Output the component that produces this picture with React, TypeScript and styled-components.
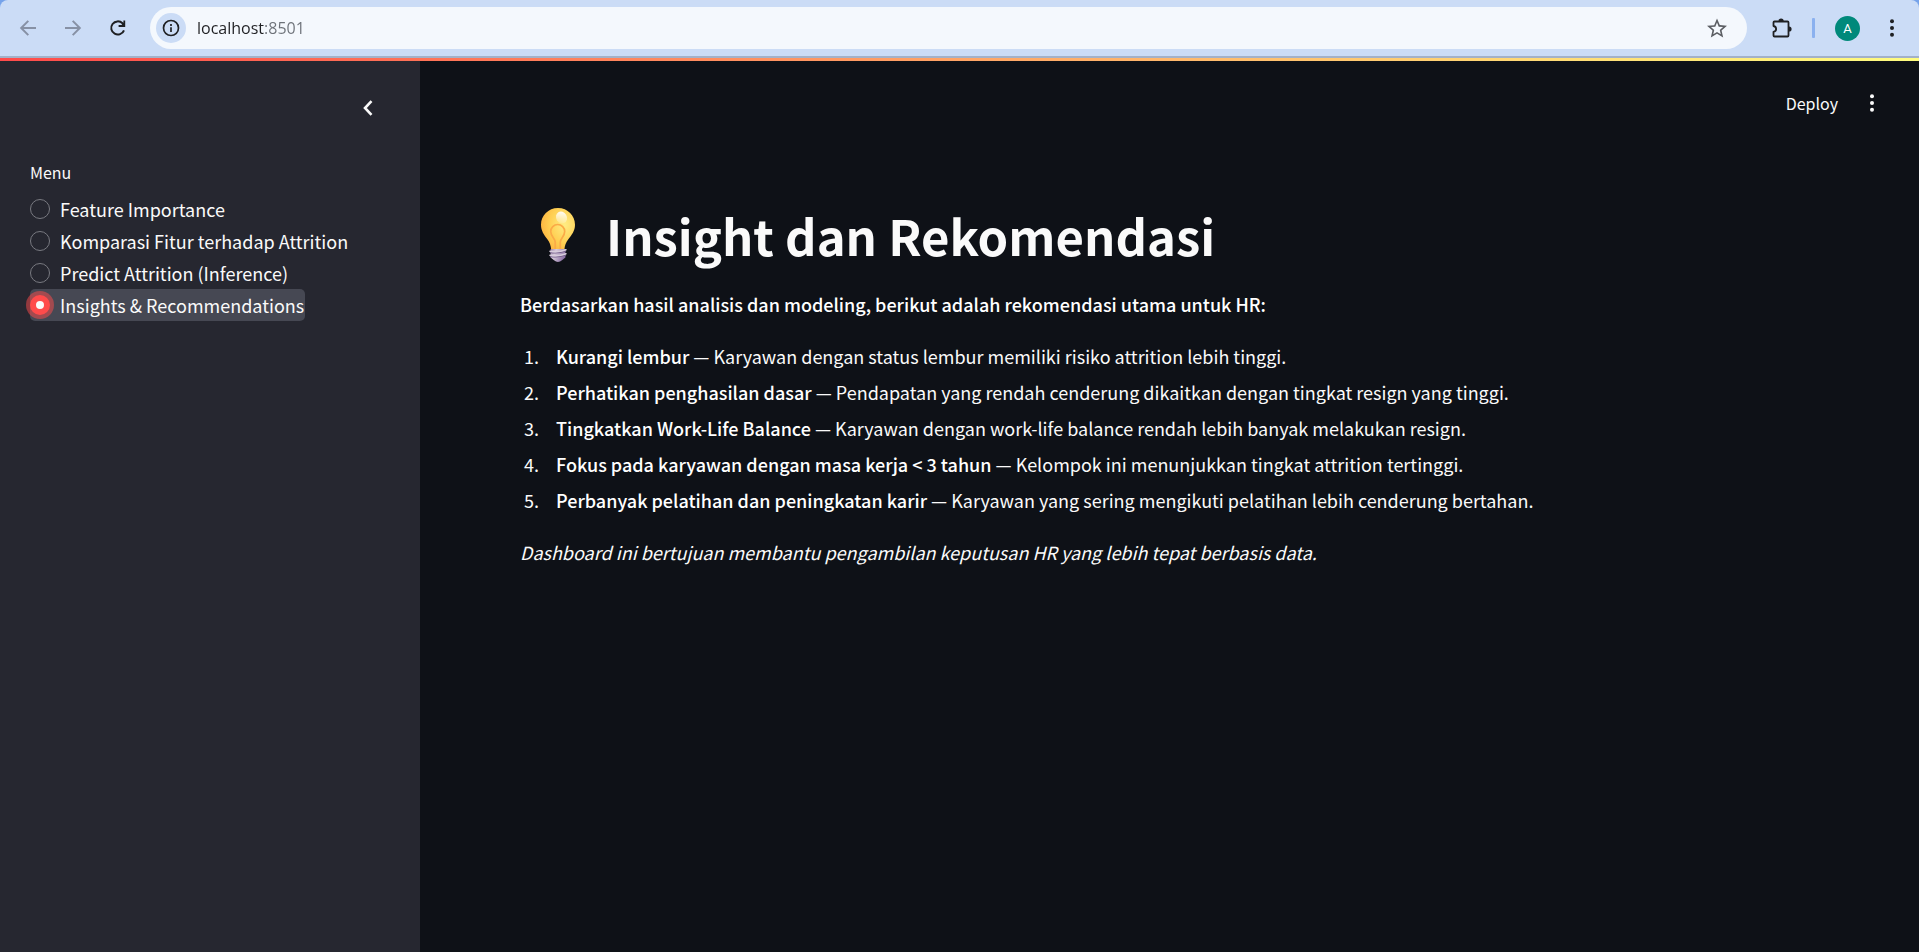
import React, { useState } from 'react';
import styled, { createGlobalStyle } from 'styled-components';

const GlobalStyle = createGlobalStyle`
  *, *::before, *::after { box-sizing: border-box; }
  body {
    margin: 0;
    background: #0e1117;
    color: #fafafa;
    font-family: "Noto Sans CJK SC", "Open Sans", sans-serif;
    font-size: 18px;
    line-height: 32px;
  }
  button, input { font: inherit; color: inherit; }
  strong { font-weight: 500; color: #fff; }
`;

const Window = styled.div`
  min-height: 100vh;
  display: flex;
  flex-direction: column;
`;

const BrowserFrame = styled.div`
  background: #76a3ea;
`;

const BrowserBar = styled.header`
  height: 58px;
  display: flex;
  align-items: center;
  padding: 0 15px 0 16px;
  background: #cbdcf6;
  border-bottom: 2px solid #a3b1c8;
  border-radius: 8px 8px 0 0;
`;

const IconButton = styled.button<{ $size?: number; $color?: string }>`
  display: flex;
  align-items: center;
  justify-content: center;
  flex: none;
  width: ${({ $size = 24 }) => $size}px;
  height: ${({ $size = 24 }) => $size}px;
  padding: 0;
  border: 0;
  background: none;
  color: ${({ $color = '#1f2023' }) => $color};
  cursor: pointer;
`;

const NavButtons = styled.nav`
  display: flex;
  gap: 21px;
  margin-right: 20px;
`;

const AddressBar = styled.div`
  flex: 1;
  height: 42px;
  display: flex;
  align-items: center;
  padding: 0 18px 0 6px;
  border-radius: 21px;
  background: #f4f8fd;
`;

const SiteInfo = styled(IconButton)`
  border-radius: 50%;
  background: #cbdcf6;
`;

const AddressInput = styled.input`
  flex: 1;
  min-width: 0;
  margin-left: 11px;
  padding: 0;
  border: 0;
  outline: 0;
  font-family: "Open Sans", "Noto Sans", sans-serif;
  font-size: 16px;
  line-height: 24px;
  color: transparent;
  background: linear-gradient(to right, #1f2023 68px, #6c7178 68px);
  background-clip: text;
  -webkit-background-clip: text;
`;

const BrowserActions = styled.div`
  display: flex;
  align-items: center;
  margin-left: 22px;
`;

const Divider = styled.span`
  width: 3px;
  height: 20px;
  margin: 0 20px 0 19px;
  border-radius: 1px;
  background: #8bb1ef;
`;

const Avatar = styled.button`
  width: 25px;
  height: 25px;
  margin-right: 20px;
  padding: 0;
  border: 0;
  border-radius: 50%;
  background: #00897b;
  color: #fff;
  font-family: Roboto, sans-serif;
  font-size: 13px;
  line-height: 25px;
  text-align: center;
`;

const Decoration = styled.div`
  height: 3px;
  background: linear-gradient(to right, #ff4b4b, #fffd80);
`;

const Workspace = styled.div`
  flex: 1;
  display: flex;
`;

const Sidebar = styled.aside`
  flex: none;
  width: 420px;
  padding: 32px 30px;
  background: #262730;
`;

const SidebarHeader = styled.div`
  display: flex;
  justify-content: flex-end;
  padding-right: 7px;
  margin-bottom: 38px;
`;

const MenuGroup = styled.fieldset`
  min-width: 0;
  margin: 0;
  padding: 0;
  border: 0;
`;

const MenuLabel = styled.legend`
  padding: 0;
  margin-bottom: 10px;
  font-size: 16px;
  line-height: 22px;
`;

const MenuItem = styled.label<{ $focused: boolean }>`
  display: flex;
  align-items: center;
  gap: 10px;
  width: fit-content;
  height: 32px;
  padding-right: 1px;
  border-radius: 5px;
  background: ${({ $focused }) => ($focused ? '#464853' : 'transparent')};
  white-space: nowrap;
  cursor: pointer;
`;

const Radio = styled.input`
  appearance: none;
  flex: none;
  width: 20px;
  height: 20px;
  margin: 0;
  border: 1px solid #797a81;
  border-radius: 50%;
  background: #262730;

  &:checked {
    border: 6px solid #ff4b4b;
    background: #fafafa;
    box-shadow: 0 0 0 4px rgba(255, 75, 75, 0.5);
  }
`;

const Main = styled.main`
  flex: 1;
  min-width: 0;
`;

const Toolbar = styled.div`
  display: flex;
  justify-content: flex-end;
  align-items: center;
  gap: 22px;
  padding: 26px 35px 0;
`;

const DeployButton = styled.button`
  padding: 0;
  border: 0;
  background: none;
  font-size: 16px;
  line-height: 32px;
  cursor: pointer;
`;

const Content = styled.article`
  padding: 84px 100px 100px;
`;

const Title = styled.h1`
  display: flex;
  align-items: center;
  gap: 30px;
  margin: 0;
  padding-left: 20px;
  font-size: 49px;
  line-height: 64px;
  font-weight: 700;
`;

const Paragraph = styled.p`
  margin: 0 0 20px;
`;

const Lead = styled(Paragraph)`
  margin-top: 21px;
`;

const Recommendations = styled.ol`
  margin: 0 0 20px;
  padding: 0;
`;

const Recommendation = styled.li`
  margin: 4px 0 4px 23px;
  padding-left: 13px;
`;

const ArrowIcon = ({ forward = false }: { forward?: boolean }) => (
  <svg width="24" height="24" viewBox="0 0 24 24" fill="none" stroke="currentColor" strokeWidth="2" aria-hidden="true">
    {forward ? <path d="M4 12h14.5M11.7 4.9 18.8 12l-7.1 7.1" /> : <path d="M20 12H5.500M12.300 4.900 5.200 12l7.100 7.100" />}
  </svg>
);

const ReloadIcon = () => (
  <svg width="24" height="24" viewBox="0 0 24 24" fill="none" stroke="currentColor" strokeWidth="2" aria-hidden="true">
    <path d="M18 14.300A6.600 6.600 0 1 1 16.500 7.300L18 9" />
    <path d="M18.300 4.500v5.500h-5.700" strokeWidth="1.800" />
    <path d="M18.500 6v4h-4z" fill="currentColor" stroke="none" />
  </svg>
);

const InfoIcon = () => (
  <svg width="18" height="18" viewBox="0 0 18 18" fill="none" stroke="currentColor" strokeWidth="1.700" aria-hidden="true">
    <circle cx="9" cy="9" r="7.500" />
    <path d="M9 8.200v4.800M9 5v1.900" />
  </svg>
);

const StarIcon = () => (
  <svg width="24" height="24" viewBox="0 0 24 24" fill="currentColor" aria-hidden="true">
    <path d="M22 9.740l-7.190-.62L12 2.500 9.190 9.130 2 9.740l5.460 4.730L5.820 21.500 12 17.770 18.180 21.500l-1.630-7.030L22 9.740zM12 15.900l-3.760 2.270 1-4.280-3.320-2.880 4.380-.38L12 6.600l1.710 4.040 4.380.38-3.320 2.880 1 4.280L12 15.900z" />
  </svg>
);

const PuzzleIcon = () => (
  <svg width="24" height="24" viewBox="0 0 24 24" aria-hidden="true">
    <path
      d="M5.500 5.500h13q1 0 1 1v13q0 1-1 1h-13q-1 0-1-1v-3.700c3.500-.7 3.500-5.100 0-5.800V6.500q0-1 1-1z"
      fill="none"
      stroke="currentColor"
      strokeWidth="1.800"
      strokeLinejoin="round"
    />
    <path d="M9.500 5a2.600 2.600 0 0 1 5.200 0zM20 10.400a2.600 2.600 0 0 1 0 5.200z" fill="currentColor" />
  </svg>
);

const DotsIcon = () => (
  <svg width="24" height="24" viewBox="0 0 24 24" fill="currentColor" aria-hidden="true">
    <circle cx="12" cy="5.300" r="2" />
    <circle cx="12" cy="12" r="2" />
    <circle cx="12" cy="18.700" r="2" />
  </svg>
);

const ChevronIcon = () => (
  <svg width="24" height="24" viewBox="0 0 24 24" fill="none" stroke="currentColor" strokeWidth="2.600" aria-hidden="true">
    <path d="M15.500 5.200 9 12l6.500 6.800" />
  </svg>
);

const BulbIcon = () => (
  <svg width="36" height="56" viewBox="0 0 36 56" role="img" aria-label="Light bulb">
    <defs>
      <radialGradient id="glass" cx="0.7" cy="0.4" r="0.75">
        <stop offset="0" stopColor="#ffec83" />
        <stop offset="0.6" stopColor="#ffcf52" />
        <stop offset="1" stopColor="#fcb23f" />
      </radialGradient>
      <linearGradient id="base" x1="0" x2="1" y1="0" y2="0.4">
        <stop offset="0" stopColor="#9a83a9" />
        <stop offset="0.35" stopColor="#d9cbdb" />
        <stop offset="1" stopColor="#8c72a5" />
      </linearGradient>
      <linearGradient id="shine" x1="0.8" x2="0.2" y1="0" y2="1">
        <stop offset="0" stopColor="#fff" />
        <stop offset="1" stopColor="#fff" stopOpacity="0.1" />
      </linearGradient>
    </defs>
    <path
      d="M18 1C8.200 1 1 8.600 1 17.700c0 6.100 3.100 10.200 6.200 14.200 2.600 3.300 3.600 6.400 4 10.600h13.200c.3-4.200 1.500-7.300 4.100-10.600C31.700 27.900 35 23.800 35 17.700 35 8.600 27.800 1 18 1z"
      fill="url(#glass)"
    />
    <ellipse cx="21.500" cy="10.500" rx="5.300" ry="6.200" transform="rotate(-30 21.500 10.500)" fill="url(#shine)" />
    <path
      d="M15.200 42v-7c0-3.500-4.500-5.500-4.500-10.500a7 7 0 0 1 14 0c0 5-4.400 7-4.400 10.500v7"
      fill="none"
      stroke="#fbaa47"
      strokeWidth="1.700"
    />
    <path d="M10.600 42h14.800v8.500l-3.400 2.800q-4 3.400-8 0l-3.400-2.800z" fill="url(#base)" />
    <path d="M10 45.500q8 1.500 16-1.500M10 49.500q8 1.500 16-1.500" fill="none" stroke="#75608b" strokeWidth="1.200" />
    <path d="M10 44.200q8 1.500 16-1.500M10 48.200q8 1.500 16-1.500" fill="none" stroke="#d8ccdc" strokeWidth="1.500" strokeLinecap="round" />
  </svg>
);

const pages = [
  'Feature Importance',
  'Komparasi Fitur terhadap Attrition',
  'Predict Attrition (Inference)',
  'Insights & Recommendations',
];

const recommendations = [
  ['Kurangi lembur', 'Karyawan dengan status lembur memiliki risiko attrition lebih tinggi.'],
  ['Perhatikan penghasilan dasar', 'Pendapatan yang rendah cenderung dikaitkan dengan tingkat resign yang tinggi.'],
  ['Tingkatkan Work-Life Balance', 'Karyawan dengan work-life balance rendah lebih banyak melakukan resign.'],
  ['Fokus pada karyawan dengan masa kerja < 3 tahun', 'Kelompok ini menunjukkan tingkat attrition tertinggi.'],
  ['Perbanyak pelatihan dan peningkatan karir', 'Karyawan yang sering mengikuti pelatihan lebih cenderung bertahan.'],
];

export default function App() {
  const [page, setPage] = useState(pages[3]);

  return (
    <Window>
      <GlobalStyle />
      <BrowserFrame>
        <BrowserBar>
          <NavButtons aria-label="Browser navigation">
            <IconButton $color="#8791a5" aria-label="Back"><ArrowIcon /></IconButton>
            <IconButton $color="#8791a5" aria-label="Forward"><ArrowIcon forward /></IconButton>
            <IconButton aria-label="Reload"><ReloadIcon /></IconButton>
          </NavButtons>
          <AddressBar>
            <SiteInfo $size={30} aria-label="Site information"><InfoIcon /></SiteInfo>
            <AddressInput aria-label="Address" defaultValue="localhost:8501" spellCheck={false} />
            <IconButton $color="#5b5e63" aria-label="Bookmark"><StarIcon /></IconButton>
          </AddressBar>
          <BrowserActions>
            <IconButton aria-label="Extensions"><PuzzleIcon /></IconButton>
            <Divider />
            <Avatar aria-label="Profile">A</Avatar>
            <IconButton aria-label="Browser menu"><DotsIcon /></IconButton>
          </BrowserActions>
        </BrowserBar>
      </BrowserFrame>
      <Decoration />
      <Workspace>
        <Sidebar>
          <SidebarHeader>
            <IconButton $size={30} $color="#fafafa" aria-label="Collapse sidebar"><ChevronIcon /></IconButton>
          </SidebarHeader>
          <MenuGroup>
            <MenuLabel>Menu</MenuLabel>
            {pages.map((name) => (
              <MenuItem key={name} $focused={name === page}>
                <Radio type="radio" name="page" checked={name === page} onChange={() => setPage(name)} />
                {name}
              </MenuItem>
            ))}
          </MenuGroup>
        </Sidebar>
        <Main>
          <Toolbar>
            <DeployButton>Deploy</DeployButton>
            <IconButton $color="#fafafa" aria-label="App menu"><DotsIcon /></IconButton>
          </Toolbar>
          <Content>
            <Title><BulbIcon />Insight dan Rekomendasi</Title>
            <Lead><strong>Berdasarkan hasil analisis dan modeling, berikut adalah rekomendasi utama untuk HR:</strong></Lead>
            <Recommendations>
              {recommendations.map(([topic, detail]) => (
                <Recommendation key={topic}><strong>{topic}</strong> — {detail}</Recommendation>
              ))}
            </Recommendations>
            <Paragraph><em>Dashboard ini bertujuan membantu pengambilan keputusan HR yang lebih tepat berbasis data.</em></Paragraph>
          </Content>
        </Main>
      </Workspace>
    </Window>
  );
}
